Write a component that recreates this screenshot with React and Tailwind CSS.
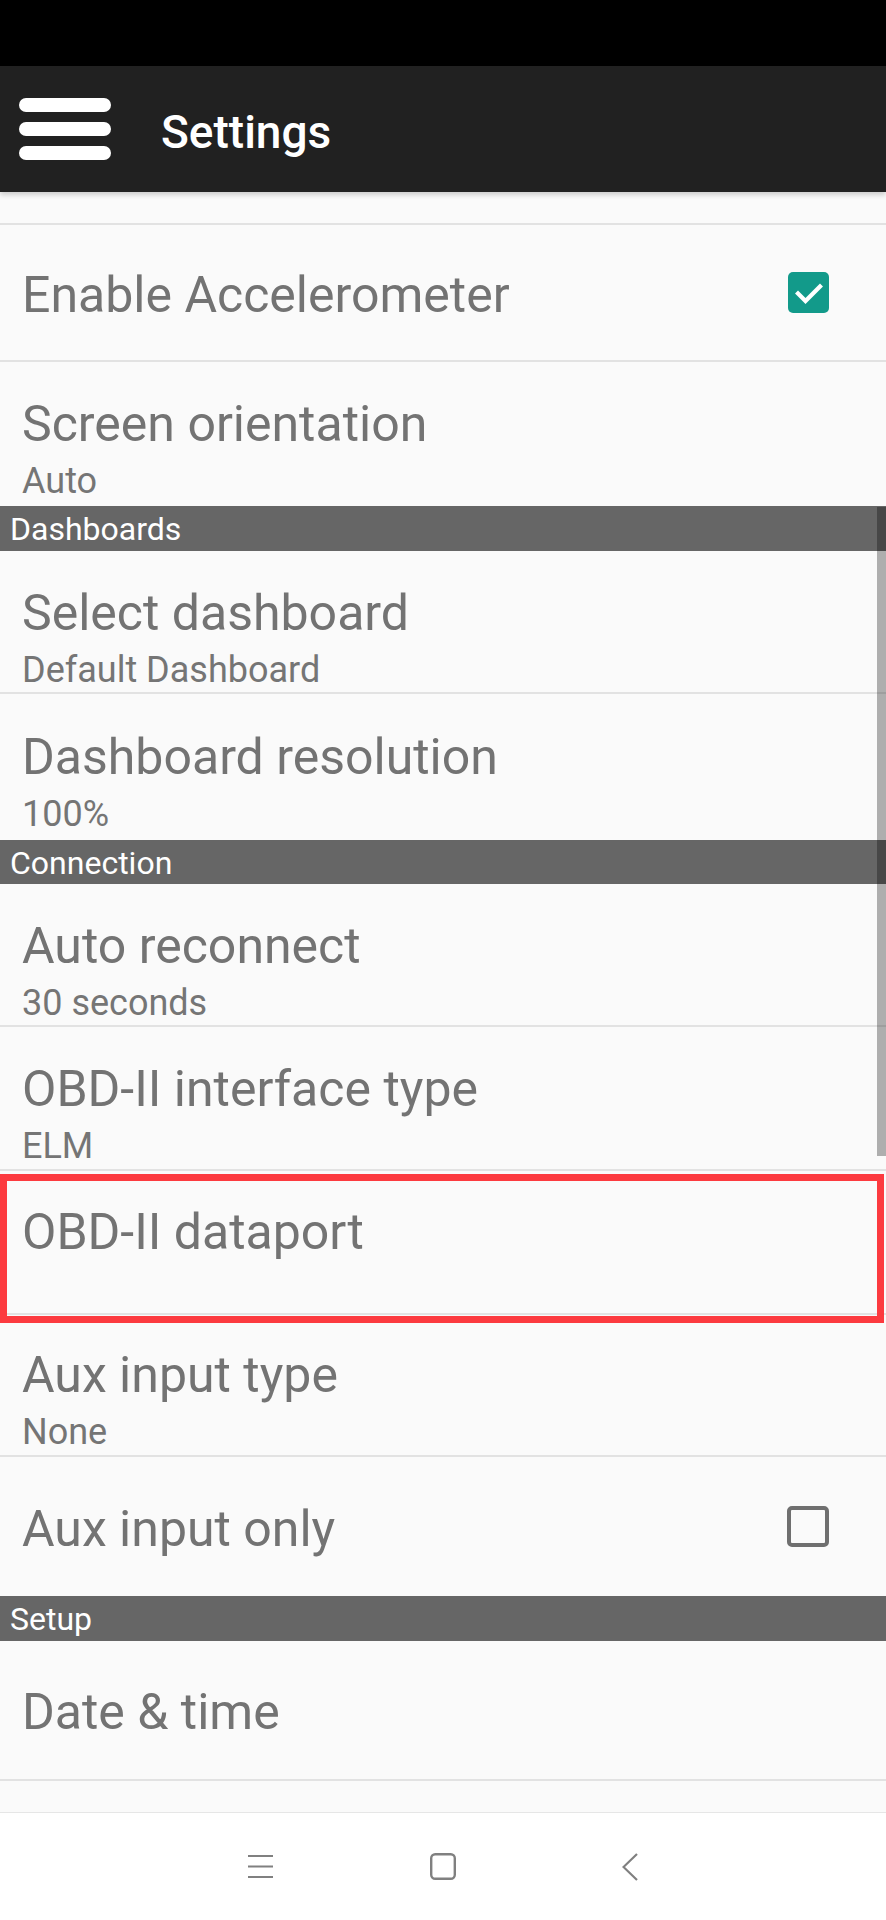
import React from "react";

function Check({ checked }) {
  if (checked) {
    return (
      <div className="w-[41px] h-[41px] rounded-[5px] bg-[#129a8a] flex items-center justify-center">
        <svg width="32" height="32" viewBox="0 0 32 32">
          <path d="M5 16.5 L12.5 24 L27 9.5" fill="none" stroke="#ffffff" strokeWidth="4.2" strokeLinecap="square" />
        </svg>
      </div>
    );
  }
  return <div className="w-[42px] h-[41px] rounded-[5px] border-[4px] border-[#6f6f6f]" />;
}

function Row({ title, summary, h, pt, divider, checkbox }) {
  const base = "flex w-full shrink-0 bg-[#fafafa] pl-[22px]";
  const div = divider ? " border-b-2 border-[#e2e2e2]" : "";
  if (checkbox !== undefined) {
    return (
      <div className={base + div + " items-center justify-between pr-[57px]"} style={{ height: h }}>
        <div className="text-[50px] leading-[56px] text-[#737373] mt-[4px]">{title}</div>
        <Check checked={checkbox} />
      </div>
    );
  }
  return (
    <div className={base + div + " flex-col"} style={{ height: h, paddingTop: pt }}>
      <div className="text-[50px] leading-[56px] text-[#737373]">{title}</div>
      {summary && <div className="text-[36px] leading-[40px] text-[#757575] mt-[9px]">{summary}</div>}
    </div>
  );
}

function Header({ label, h }) {
  return (
    <div className="w-full shrink-0 bg-[#666666] pl-[10px] pt-[2px] text-white text-[32px] leading-[43px]" style={{ height: h }}>
      {label}
    </div>
  );
}

export default function App() {
  return (
    <div
      className="relative w-[886px] h-[1920px] overflow-hidden bg-[#fafafa] flex flex-col"
      style={{ fontFamily: "Roboto, 'Noto Sans', sans-serif" }}
    >
      <div className="h-[66px] w-full bg-black shrink-0" />
      <div className="relative z-10 h-[126px] w-full shrink-0 bg-[#212121] flex items-center pl-[19px] shadow-[0_3px_5px_rgba(0,0,0,0.18)]">
        <div className="flex flex-col gap-[10px] w-[92px]">
          <div className="h-[14px] w-full rounded-full bg-white" />
          <div className="h-[14px] w-full rounded-full bg-white" />
          <div className="h-[14px] w-full rounded-full bg-white" />
        </div>
        <div className="ml-[50px] text-white text-[46px] leading-[52px] font-medium mt-[5px]">Settings</div>
      </div>

      <div className="h-[33px] w-full shrink-0 border-b-2 border-[#e2e2e2]" />
      <Row title="Enable Accelerometer" h={137} divider checkbox={true} />
      <Row title="Screen orientation" summary="Auto" h={144} pt={34} />
      <Header label="Dashboards" h={45} />
      <Row title="Select dashboard" summary="Default Dashboard" h={143} pt={34} divider />
      <Row title="Dashboard resolution" summary="100%" h={146} pt={35} />
      <Header label="Connection" h={44} />
      <Row title="Auto reconnect" summary="30 seconds" h={143} pt={34} divider />
      <Row title="OBD-II interface type" summary="ELM" h={144} pt={34} divider />
      <Row title="OBD-II dataport" h={144} pt={33} divider />
      <Row title="Aux input type" summary="None" h={142} pt={32} divider />
      <Row title="Aux input only" h={139} checkbox={false} />
      <Header label="Setup" h={45} />
      <Row title="Date & time" h={140} pt={43} divider />
      <div className="h-[32px] w-full shrink-0 border-b border-[#e6e6e6]" />

      <div className="flex-1 w-full bg-white flex items-center pl-[248px]">
        <svg width="25" height="25" viewBox="0 0 25 25">
          <path d="M0 2 H25 M0 12.5 H25 M0 23 H25" stroke="#808080" strokeWidth="2.2" />
        </svg>
        <svg width="26" height="27" viewBox="0 0 26 27" className="ml-[157px]">
          <rect x="1.2" y="1.2" width="23.6" height="24.6" rx="4" fill="none" stroke="#808080" strokeWidth="2.4" />
        </svg>
        <svg width="16" height="28" viewBox="0 0 16 28" className="ml-[166px]">
          <path d="M15 1 L1.5 14 L15 27" fill="none" stroke="#808080" strokeWidth="2.2" />
        </svg>
      </div>

      {/* scrollbar */}
      <div className="absolute right-0 top-[507px] w-[9px] h-[649px] bg-black/30" />
      {/* highlight annotation */}
      <div className="absolute left-0 top-[1174px] w-[884px] h-[149px] border-[7px] border-[#fc3a3f]" />
    </div>
  );
}
